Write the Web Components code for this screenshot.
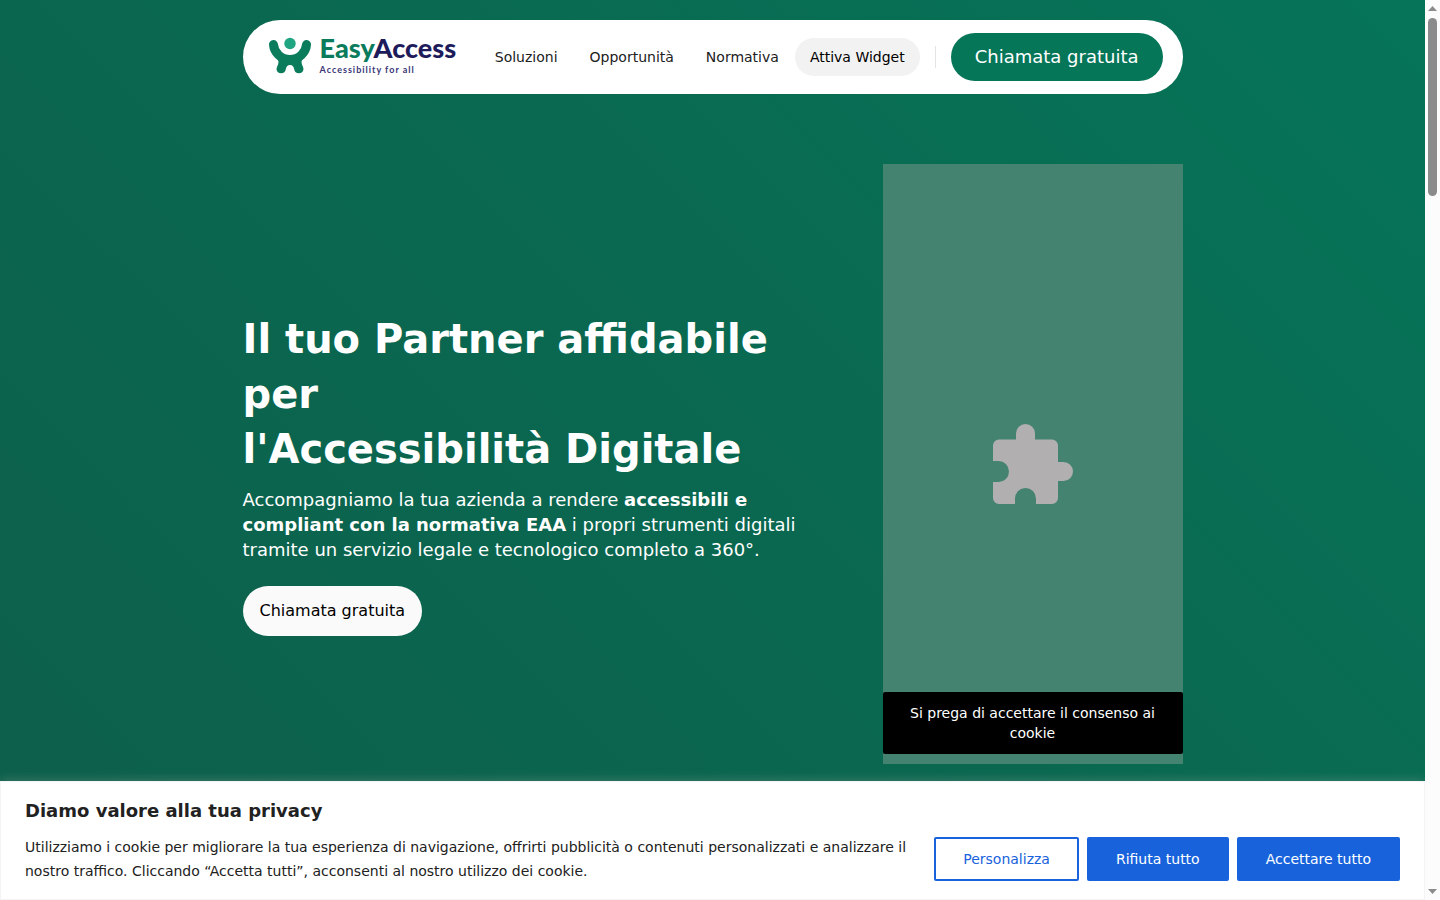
<!DOCTYPE html>
<html lang="it">
<head>
<meta charset="utf-8">
<title>EasyAccess</title>
<style>
  html, body { margin: 0; height: 100%; }
  body { font-family: "DejaVu Sans", sans-serif; color: #212121; }
</style>
</head>
<body>
<ea-page>
  <ea-header slot="header"></ea-header>
  <ea-hero slot="hero"><ea-consent-media slot="media">Si prega di accettare il consenso ai cookie</ea-consent-media></ea-hero>
  <ea-cookie-bar slot="banner"></ea-cookie-bar>
  <ea-scrollbar slot="scroll"></ea-scrollbar>
</ea-page>

<script>
const define = (name, html) => {
  const template = document.createElement('template');
  template.innerHTML = html;
  customElements.define(name, class extends HTMLElement {
    constructor() {
      super();
      this.attachShadow({ mode: 'open' }).append(template.content.cloneNode(true));
    }
  });
};

define('ea-page', `
<style>
  :host { display: grid; grid-template-columns: minmax(0, 1fr) 15px; height: 100vh; overflow: hidden; }
  .view { display: flex; flex-direction: column; min-height: 0; overflow: hidden; background: linear-gradient(45deg, #0d5f4b 0%, #0a6850 50%, #057458 100%); }
  main { flex: 1; min-height: 0; padding: 20px 20px 0; }
</style>
<div class="view">
  <main><slot name="header"></slot><slot name="hero"></slot></main>
  <slot name="banner"></slot>
</div>
<slot name="scroll"></slot>`);

define('ea-logo', `
<style>
  :host { display: block; }
  a { display: flex; align-items: center; gap: 9px; padding-bottom: 4px; text-decoration: none; }
  svg { display: block; width: 42px; height: 37px; }
  .name { display: block; font: 900 27px/28px Lato, sans-serif; color: #0a7c5c; }
  .name b { font-weight: 900; color: #1d1b5a; }
  .tag { display: block; padding-top: 2px; font: 700 9px/12px Lato, sans-serif; letter-spacing: 1px; color: #3a3577; }
</style>
<a href="#">
  <svg viewBox="0 0 42 37" aria-hidden="true">
    <circle cx="21" cy="6.500" r="5.700" fill="#20a582"/>
    <path d="M4.500 7.500C5 15.500 12 22.500 21 22.500S37 15.500 37.500 7.500" fill="none" stroke="#0a7c5c" stroke-width="9" stroke-linecap="round"/>
    <path d="M6 18h30c-2 3-3.500 5-3.500 7 0 3 2 4.500 2 7.300a4.700 4.700 0 0 1-9.300 0C25 30 23.500 28 21 28s-4 2-4.200 4.300a4.700 4.700 0 0 1-9.300 0c0-2.800 2-4.300 2-7.300 0-2-1.500-4-3.500-7z" fill="#0a7c5c"/>
  </svg>
  <span><span class="name">Easy<b>Access</b></span><span class="tag">Accessibility for all</span></span>
</a>`);

define('ea-header', `
<style>
  :host { display: block; max-width: 940px; margin: 0 auto; }
  header { display: flex; align-items: center; box-sizing: border-box; height: 74px; padding: 0 20px 0 26px; border-radius: 37px; background: #fff; }
  nav { display: flex; align-items: center; gap: 32px; margin-left: auto; margin-right: 16px; font-size: 14px; line-height: 20px; }
  nav a { color: #212121; text-decoration: none; }
  button { border: 0; font-family: inherit; cursor: pointer; white-space: nowrap; }
  .widget { height: 38px; padding: 0 15px; border-radius: 19px; background: #f2f2f2; color: #000; font-size: 14px; }
  .rule { width: 1px; height: 22px; margin: 0 15px; background: #e4e4e4; }
  .cta { height: 48px; padding: 0 24px 2px; border-radius: 24px; background: #067659; color: #fff; font-size: 18px; }
</style>
<header>
  <ea-logo></ea-logo>
  <nav><a href="#">Soluzioni</a><a href="#">Opportunità</a><a href="#">Normativa</a></nav>
  <button class="widget">Attiva Widget</button>
  <span class="rule"></span>
  <button class="cta">Chiamata gratuita</button>
</header>`);

define('ea-hero', `
<style>
  :host { display: grid; grid-template-columns: minmax(0, 1fr) 300px; gap: 70px; align-items: center; max-width: 940px; margin: 70px auto 0; color: #fff; }
  .copy { padding-top: 20px; }
  h1 { margin: 0 0 10px; font-size: 40px; line-height: 55px; }
  p { margin: 0 0 24px; font-size: 18px; line-height: 25px; }
  button { height: 50px; padding: 0 17px 2px; border: 0; border-radius: 25px; background: #fafafa; color: #000; font: 16px "DejaVu Sans", sans-serif; cursor: pointer; }
</style>
<div class="copy">
  <h1>Il tuo Partner affidabile per<br>l'Accessibilità Digitale</h1>
  <p>Accompagniamo la tua azienda a rendere <b>accessibili e compliant con la normativa EAA</b> i propri strumenti digitali tramite un servizio legale e tecnologico completo a 360°.</p>
  <button>Chiamata gratuita</button>
</div>
<slot name="media"></slot>`);

define('ea-consent-media', `
<style>
  :host { display: grid; grid-template-rows: 1fr auto; position: relative; box-sizing: border-box; height: 600px; padding-bottom: 10px; background: #458371; }
  svg { position: absolute; inset: 0; margin: auto; width: 80px; height: 80px; }
  p { grid-row: 2; margin: 0; padding: 11px 20px; border-radius: 2px; background: #000; color: #fff; font-size: 14px; line-height: 20px; text-align: center; }
</style>
<svg viewBox="0 0 80 80" aria-hidden="true"><path fill="#b2afb0" d="M6 15.500h17V9.500a9.500 9.500 0 0 1 19 0v6h17a6 6 0 0 1 6 6V38h5.500a9.500 9.500 0 0 1 0 19H65v17a6 6 0 0 1-6 6H43v-5.500a10.500 10.500 0 0 0-21 0V80H6a6 6 0 0 1-6-6V58h5.500a10.500 10.500 0 0 0 0-21H0V21.500a6 6 0 0 1 6-6z"/></svg>
<p><slot></slot></p>`);

define('ea-cookie-bar', `
<style>
  :host { display: block; position: relative; background: #fff; border: 1px solid #f4f4f4; box-shadow: 0 -1px 10px rgba(172, 171, 171, .3); padding: 17px 24px 16px; }
  h2 { margin: 0 0 12px; font-size: 18px; line-height: 24px; }
  .row { display: flex; align-items: center; gap: 24px; }
  p { flex: 1; margin: 0; font-size: 14px; line-height: 24px; }
  .actions { display: flex; gap: 8px; }
  button { height: 44px; padding: 0 27px; border: 2px solid #1863dc; border-radius: 2px; background: #1863dc; color: #fff; font: 14px "DejaVu Sans", sans-serif; white-space: nowrap; cursor: pointer; }
  .outline { background: #fff; color: #1863dc; }
</style>
<h2>Diamo valore alla tua privacy</h2>
<div class="row">
  <p>Utilizziamo i cookie per migliorare la tua esperienza di navigazione, offrirti pubblicità o contenuti personalizzati e analizzare il nostro traffico. Cliccando “Accetta tutti”, acconsenti al nostro utilizzo dei cookie.</p>
  <div class="actions"><button class="outline">Personalizza</button><button>Rifiuta tutto</button><button>Accettare tutto</button></div>
</div>`);

define('ea-scrollbar', `
<style>
  :host { display: flex; flex-direction: column; align-items: center; box-sizing: border-box; padding: 6px 0; background: #fcfcfc; }
  svg { display: block; width: 9px; height: 5px; fill: #8b8b8b; }
  .track { flex: 1; padding-top: 7px; }
  .thumb { width: 9px; height: 178px; border-radius: 5px; background: #8b8b8b; }
</style>
<svg viewBox="0 0 9 5"><path d="M0 5 4.500 0 9 5z"/></svg>
<div class="track"><div class="thumb"></div></div>
<svg viewBox="0 0 9 5"><path d="M0 0 4.500 5 9 0z"/></svg>`);
</script>
</body>
</html>
